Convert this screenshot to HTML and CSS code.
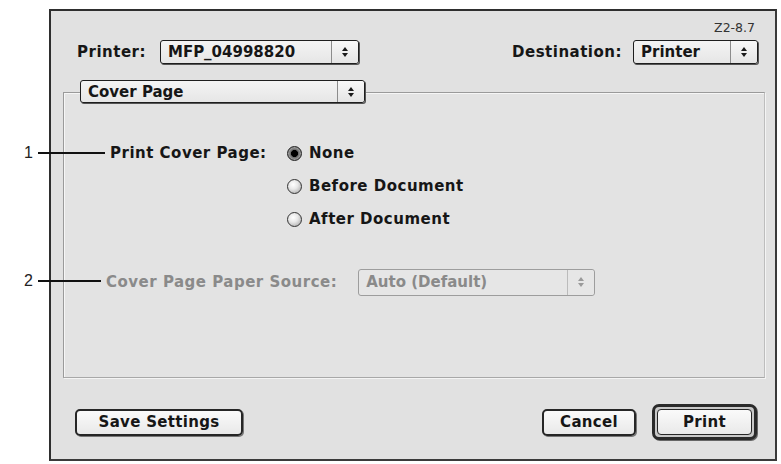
FILE: index.html
```html
<!DOCTYPE html>
<html>
<head>
<meta charset="utf-8">
<link rel="stylesheet" href="styles.css">
</head>
<body>
<div class="callout callout-1"><span class="num">1</span><span class="line"></span></div>
<div class="callout callout-2"><span class="num">2</span><span class="line"></span></div>
<div class="window">
  <div class="version">Z2-8.7</div>
  <div class="toprow">
    <div class="field">
      <span class="label">Printer:</span>
      <div class="popup popup-printer"><span class="val">MFP_04998820</span><span class="arrows"><i class="up"></i><i class="down"></i></span></div>
    </div>
    <div class="field">
      <span class="label">Destination:</span>
      <div class="popup popup-dest"><span class="val">Printer</span><span class="arrows"><i class="up"></i><i class="down"></i></span></div>
    </div>
  </div>
  <div class="panel">
    <div class="popup popup-tab"><span class="val">Cover Page</span><span class="arrows"><i class="up"></i><i class="down"></i></span></div>
    <div class="options">
      <span class="label opt-label">Print Cover Page:</span>
      <div class="radios">
        <div class="radio-row"><span class="radio on"></span><span class="label">None</span></div>
        <div class="radio-row"><span class="radio"></span><span class="label">Before Document</span></div>
        <div class="radio-row"><span class="radio"></span><span class="label">After Document</span></div>
      </div>
    </div>
    <div class="source-row">
      <span class="label disabled">Cover Page Paper Source:</span>
      <div class="popup popup-source disabled-popup"><span class="val">Auto (Default)</span><span class="arrows"><i class="up"></i><i class="down"></i></span></div>
    </div>
  </div>
  <div class="buttons">
    <div class="btn btn-save">Save Settings</div>
    <div class="right-btns">
      <div class="btn btn-cancel">Cancel</div>
      <div class="default-ring"><div class="btn btn-print">Print</div></div>
    </div>
  </div>
</div>
</body>
</html>
```
FILE: styles.css
```css
* { box-sizing: border-box; }
html, body { margin: 0; padding: 0; background: #ffffff; }
body {
  width: 781px;
  height: 464px;
  position: relative;
  overflow: hidden;
  font-family: "DejaVu Sans", sans-serif;
  color: #161616;
}
.window {
  margin: 9px 0 0 49px;
  width: 728px;
  height: 452px;
  background: #e1e1e1;
  border-top: 2px solid #2e2e2e;
  border-left: 2px solid #2e2e2e;
  border-right: 2px solid #3a3a3a;
  border-bottom: 2px solid #3a3a3a;
  display: flex;
  flex-direction: column;
}
.label {
  font-weight: bold;
  font-size: 15px;
  letter-spacing: 0.5px;
  white-space: nowrap;
}
.version {
  font-family: "DejaVu Sans", sans-serif;
  font-size: 12.5px;
  line-height: 14px;
  color: #333;
  text-align: right;
  margin-top: 10px;
  padding-right: 20px;
}
.toprow {
  display: flex;
  justify-content: space-between;
  align-items: center;
  margin-top: 5px;
  height: 24px;
  padding: 0 17px 0 26px;
}
.field { display: flex; align-items: center; }
.popup {
  display: flex;
  align-items: stretch;
  height: 24px;
  border: 1px solid #1e1e1e;
  border-radius: 3px;
  box-shadow: 1px 1px 0 #555;
  background: linear-gradient(#f4f4f4, #e6e6e6);
}
.popup .val {
  flex: 1;
  display: flex;
  align-items: center;
  padding-left: 7px;
  font-weight: bold;
  font-size: 15px;
  white-space: nowrap;
}
.popup .arrows {
  width: 27px;
  border-left: 1px solid #8c8c8c;
  display: flex;
  flex-direction: column;
  align-items: center;
  justify-content: center;
  gap: 2px;
  background: linear-gradient(#f8f8f8, #e4e4e4);
  border-radius: 0 3px 3px 0;
}
.arrows i {
  display: block;
  width: 0; height: 0;
  border-left: 3.5px solid transparent;
  border-right: 3.5px solid transparent;
}
.arrows .up { border-bottom: 4px solid #1a1a1a; }
.arrows .down { border-top: 4px solid #1a1a1a; }
.popup-printer { width: 199px; margin-left: 14px; }
.popup-dest { width: 125px; margin-left: 11px; }
.panel {
  margin: 28px 10px 0 12px;
  height: 286px;
  border-top: 1px solid #9a9a9a;
  border-left: 1px solid #9a9a9a;
  border-right: 1px solid #bdbdbd;
  border-bottom: 1px solid #a8a8a8;
  box-shadow: inset 1px 1px 0 #f6f6f6, 1px 1px 0 #f4f4f4;
  background: #e3e3e3;
}
.popup-tab {
  width: 285px;
  height: 23px;
  margin: -13px 0 0 16px;
}
.options {
  display: grid;
  grid-template-columns: 177px auto;
  margin: 39px 0 0 46px;
}
.opt-label { line-height: 22px; }
.radios { display: flex; flex-direction: column; gap: 11px; }
.radio-row { display: flex; align-items: center; height: 22px; gap: 7px; }
.radio {
  width: 15px; height: 15px;
  border-radius: 50%;
  border: 1px solid #333;
  background: radial-gradient(circle at 40% 35%, #ffffff 0%, #e8e8e8 40%, #9d9d9d 100%);
}
.radio.on {
  background: radial-gradient(circle, #000 0 3.2px, #6a6a6a 3.8px, #9a9a9a 6px, #555 7.5px);
  border-color: #222;
}
.source-row {
  display: flex;
  align-items: center;
  margin: 39px 0 0 42px;
  height: 26px;
}
.disabled { color: #8a8a8a; }
.popup-source {
  width: 237px;
  height: 27px;
  margin-left: 21px;
}
.disabled-popup {
  border-color: #9d9d9d;
  box-shadow: none;
  background: #e6e6e6;
}
.disabled-popup .val { color: #8a8a8a; }
.disabled-popup .arrows { border-left-color: #bbbbbb; background: #e6e6e6; }
.disabled-popup .arrows .up { border-bottom-color: #9a9a9a; }
.disabled-popup .arrows .down { border-top-color: #9a9a9a; }
.buttons {
  display: flex;
  justify-content: space-between;
  align-items: center;
  margin-top: 26px;
  height: 36px;
  padding: 0 18px 0 24px;
}
.right-btns { display: flex; align-items: center; gap: 16px; }
.btn {
  height: 27px;
  border: 2px solid #262626;
  border-radius: 5px;
  background: linear-gradient(#fafafa, #e9e9e9);
  box-shadow: 1px 1px 0 #777;
  display: flex;
  align-items: center;
  justify-content: center;
  font-weight: bold;
  font-size: 15px;
  letter-spacing: 0.3px;
  white-space: nowrap;
}
.btn-save { width: 168px; }
.btn-cancel { width: 94px; }
.default-ring {
  width: 105px;
  height: 36px;
  border: 3px solid #2a2a2a;
  border-radius: 7px;
  padding: 2px;
  background: #c8c8c8;
  box-shadow: 1px 1px 0 #666;
}
.btn-print { width: 100%; height: 100%; box-shadow: none; border-width: 1px; border-radius: 4px; }
.callout {
  position: absolute;
  left: 0;
  display: flex;
  align-items: center;
  height: 20px;
  z-index: 2;
}
.callout .num {
  font-family: "Liberation Sans", Arial, sans-serif;
  font-size: 16px;
  color: #222;
  width: 38px;
  text-align: right;
  padding-right: 5px;
}
.callout .line { display: block; height: 1.5px; background: #111; }
.callout-1 { top: 143px; }
.callout-1 .line { width: 67px; }
.callout-2 { top: 271px; }
.callout-2 .line { width: 63px; }
```
